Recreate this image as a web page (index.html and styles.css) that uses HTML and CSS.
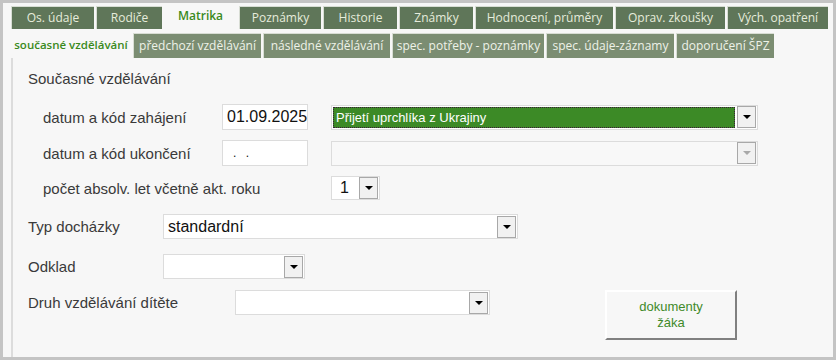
FILE: index.html
```html
<!DOCTYPE html>
<html lang="cs">
<head>
    <meta charset="UTF-8">
    <meta name="viewport" content="width=device-width, initial-scale=1.0">
    <title>Matrika - současné vzdělávání</title>
    <link rel="stylesheet" href="styles.css">
</head>
<body>
    <div class="frame">
        <div class="tabs main-tabs">
            <div class="tab">Os. údaje</div>
            <div class="tab">Rodiče</div>
            <div class="tab active">Matrika</div>
            <div class="tab">Poznámky</div>
            <div class="tab">Historie</div>
            <div class="tab">Známky</div>
            <div class="tab">Hodnocení, průměry</div>
            <div class="tab">Oprav. zkoušky</div>
            <div class="tab">Vých. opatření</div>
        </div>
        <div class="tabs sub-tabs">
            <div class="tab active">současné vzdělávání</div>
            <div class="tab">předchozí vzdělávání</div>
            <div class="tab">následné vzdělávání</div>
            <div class="tab">spec. potřeby - poznámky</div>
            <div class="tab">spec. údaje-záznamy</div>
            <div class="tab">doporučení ŠPZ</div>
        </div>

        <div class="panel">
            <div class="heading">Současné vzdělávání</div>

            <div class="current">
                <div class="label">datum a kód zahájení</div>
                <div class="field date">01.09.2025</div>
                <div class="select wide focused">
                    <span class="value">Přijetí uprchlíka z Ukrajiny</span>
                    <span class="arrow"></span>
                </div>

                <div class="label">datum a kód ukončení</div>
                <div class="field date empty">. .</div>
                <div class="select wide disabled">
                    <span class="value"></span>
                    <span class="arrow"></span>
                </div>

                <div class="label span">počet absolv. let včetně akt. roku</div>
                <div class="select small">
                    <span class="value">1</span>
                    <span class="arrow"></span>
                </div>
            </div>

            <div class="row row-typ">
                <div class="label main">Typ docházky</div>
                <div class="select typ">
                    <span class="value">standardní</span>
                    <span class="arrow"></span>
                </div>
            </div>

            <div class="row row-odklad">
                <div class="label main">Odklad</div>
                <div class="select odklad">
                    <span class="value"></span>
                    <span class="arrow"></span>
                </div>
            </div>

            <div class="row row-druh">
                <div class="label druh">Druh vzdělávání dítěte</div>
                <div class="select druh-select">
                    <span class="value"></span>
                    <span class="arrow"></span>
                </div>
                <button class="docs">dokumenty<br>žáka</button>
            </div>
        </div>
    </div>
</body>
</html>
```

FILE: styles.css
```css
body {
    margin: 0;
    background-color: #f7f7f7;
    font-family: "Liberation Sans", Arial, sans-serif;
}

.frame {
    width: 836px;
    height: 360px;
    box-sizing: border-box;
    border: 3px solid #c4c4c4;
    background-color: #f7f7f7;
    padding: 3px 0 0 8px;
    display: flex;
    flex-direction: column;
}

/* tabs */

.tabs {
    display: flex;
    gap: 2px;
    font-family: "Open Sans", sans-serif;
    font-size: 12px;
}

.tab {
    box-sizing: border-box;
    text-align: center;
    white-space: nowrap;
    color: #e6ecdc;
    border-top: 1px solid #d8ddd4;
    border-left: 1px solid #d8ddd4;
}

.main-tabs .tab {
    height: 23px;
    line-height: 22px;
    background-color: #5f7659;
}

.main-tabs .tab:nth-child(1) { width: 83px; }
.main-tabs .tab:nth-child(2) { width: 66px; }
.main-tabs .tab:nth-child(3) { width: 73px; }
.main-tabs .tab:nth-child(4) { width: 82px; }
.main-tabs .tab:nth-child(5) { width: 74px; }
.main-tabs .tab:nth-child(6) { width: 74px; }
.main-tabs .tab:nth-child(7) { width: 138px; }
.main-tabs .tab:nth-child(8) { width: 110px; }
.main-tabs .tab:nth-child(9) { width: 101px; }

.main-tabs .tab.active {
    height: 27px;
    margin-top: -2px;
    line-height: 24px;
    background-color: #f7f7f7;
    border: none;
    color: #3a8a1c;
    font-weight: 600;
}

.sub-tabs {
    margin-top: 2px;
}

.sub-tabs .tab {
    height: 25px;
    line-height: 24px;
    background-color: #7b8d72;
    color: #eef2e8;
}

.sub-tabs .tab:nth-child(1) { width: 120px; }
.sub-tabs .tab:nth-child(2) { width: 128px; }
.sub-tabs .tab:nth-child(3) { width: 127px; }
.sub-tabs .tab:nth-child(4) { width: 152px; }
.sub-tabs .tab:nth-child(5) { width: 128px; }
.sub-tabs .tab:nth-child(6) { width: 98px; }

.sub-tabs .tab.active {
    background-color: #f7f7f7;
    border: none;
    color: #3a8a1c;
    font-size: 11.5px;
    font-weight: 600;
}

/* panel */

.panel {
    flex: 1;
    margin-right: 1px;
    border-left: 2px solid #dcdcdc;
    padding: 11px 0 0 15px;
    font-size: 15px;
    color: #3a3a3a;
}

.heading {
    line-height: 20px;
}

.current {
    display: grid;
    grid-template-columns: 179px 86px 23px 427px;
    row-gap: 10px;
    align-items: center;
    margin: 15px 0 0 15px;
}

.current .select.wide {
    grid-column: 4;
}

.current .label.span {
    grid-column: 1 / 4;
}

.current .select.small {
    grid-column: 4;
}

.field {
    box-sizing: border-box;
    height: 26px;
    background-color: #fff;
    border: 1px solid #dcdcdc;
    padding: 0 4px;
    line-height: 24px;
    font-size: 16px;
    color: #111;
}

.field.empty {
    padding-left: 10px;
    font-size: 12px;
    letter-spacing: 3px;
}

/* custom dropdowns */

.select {
    box-sizing: border-box;
    height: 25px;
    display: flex;
    align-items: center;
    background-color: #fff;
    border: 1px solid #dcdcdc;
}

.select .value {
    flex: 1;
    padding-left: 4px;
    font-size: 16px;
    color: #111;
    white-space: nowrap;
}

.select .arrow {
    box-sizing: border-box;
    width: 19px;
    height: 22px;
    margin-right: 1px;
    border: 1px solid #a8a8a8;
    background-color: #f1f1f1;
    display: flex;
    align-items: center;
    justify-content: center;
}

.select .arrow::after {
    content: "";
    border-left: 4px solid transparent;
    border-right: 4px solid transparent;
    border-top: 4px solid #000;
}

.select.focused .value {
    align-self: stretch;
    margin: 1px 2px 1px 1px;
    padding-left: 3px;
    background-color: #3c8a26;
    outline: 1px dotted #3a1a3a;
    outline-offset: -1px;
    color: #fff;
    font-size: 13px;
    line-height: 21px;
}

.select.disabled {
    background-color: #f8f8f8;
}

.select.disabled .arrow::after {
    border-top-color: #a8a8a8;
}

.select.small {
    width: 49px;
    height: 24px;
}

.select.small .value {
    padding-left: 8px;
}

.row {
    display: flex;
    align-items: center;
}

.row-typ { margin-top: 14px; }
.row-odklad { margin-top: 15px; }
.row-druh { margin-top: 11px; align-items: flex-start; }

.label.main {
    width: 135px;
}

.label.druh {
    width: 207px;
    line-height: 25px;
}

.select.typ { width: 355px; }
.select.odklad { width: 142px; }
.select.druh-select { width: 255px; }

.docs {
    width: 132px;
    height: 50px;
    margin-left: 115px;
    background-color: #f7f7f7;
    border: 2px solid;
    border-color: #ffffff #808080 #808080 #ffffff;
    font-family: "Liberation Sans", Arial, sans-serif;
    font-size: 13px;
    line-height: 16px;
    color: #3f8a2a;
    cursor: pointer;
}
```
